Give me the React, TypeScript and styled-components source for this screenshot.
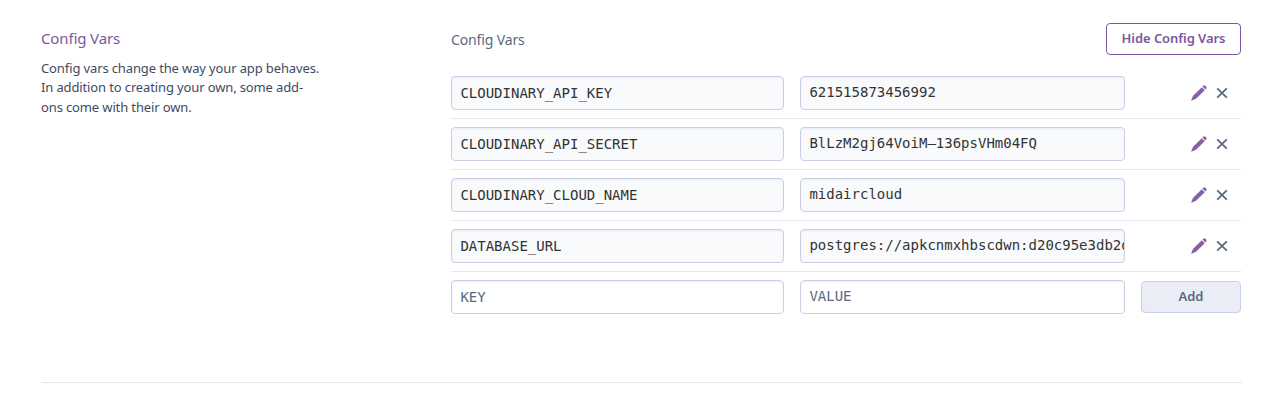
import React from "react";
import styled, { createGlobalStyle } from "styled-components";

const GlobalStyle = createGlobalStyle`
  * { box-sizing: border-box; }
  body {
    margin: 0;
    background: #fff;
    font-family: "Noto Sans", "Open Sans", sans-serif;
    font-feature-settings: "liga" 1;
  }
`;

const Section = styled.section`
  display: flex;
  width: 1200px;
  height: 383px;
  margin-left: 42px;
  border-bottom: 1px solid #e5e6ed;
`;

const Intro = styled.div`
  width: 409px;
  flex: none;
  padding-top: 28px;
  margin-left: -1px;
`;

const Title = styled.h2`
  margin: 0;
  font-size: 15px;
  line-height: 21px;
  letter-spacing: -0.15px;
  font-weight: 400;
  color: #79589f;
`;

const Description = styled.p`
  width: 290px;
  margin: 10px 0 0;
  font-size: 13px;
  line-height: 19.4px;
  letter-spacing: -0.13px;
  color: #3f4a62;
  white-space: nowrap;
`;

const Panel = styled.div`
  width: 790px;
  flex: none;
  margin-left: 1px;
`;

const PanelHeader = styled.header`
  display: flex;
  justify-content: space-between;
  height: 68px;
  padding-top: 23px;
`;

const PanelTitle = styled.h3`
  margin: 7px 0 0;
  font-size: 14px;
  line-height: 20px;
  letter-spacing: -0.15px;
  font-weight: 400;
  color: #596981;
`;

const Button = styled.button<{ $primary?: boolean }>`
  width: ${(p) => (p.$primary ? 135 : 100)}px;
  height: 32px;
  padding: 0 0 2px;
  border: 1px solid ${(p) => (p.$primary ? "#79589f" : "#cbd0e6")};
  border-radius: 4px;
  background: ${(p) => (p.$primary ? "#fff" : "#ebedf6")};
  color: ${(p) => (p.$primary ? "#79589f" : "#596981")};
  font-family: inherit;
  font-size: 13px;
  font-weight: 600;
  letter-spacing: -0.06px;
  line-height: 18px;
  white-space: nowrap;
`;

const Row = styled.div<{ $last?: boolean }>`
  display: grid;
  grid-template-columns: 333px 325px 100px;
  column-gap: 16px;
  align-items: center;
  height: ${(p) => (p.$last ? 50 : 51)}px;
  padding: 8px 0;
  border-bottom: ${(p) => (p.$last ? "none" : "1px solid #e3e5f1")};
`;

const Field = styled.div<{ $empty?: boolean; $value?: boolean }>`
  height: 34px;
  padding-left: 8.4px;
  border: 1px solid #cbd0e6;
  border-radius: 4px;
  background: ${(p) => (p.$empty ? "#fff" : "#f9fafc")};
  box-shadow: inset 0 1px 2px #e8ebf4;
  color: ${(p) => (p.$empty ? "#596981" : "#333")};
  font-family: "DejaVu Sans Mono", monospace;
  font-size: 14px;
  line-height: ${(p) => (p.$value ? 30 : 32)}px;
  white-space: nowrap;
  overflow: hidden;
`;

const Actions = styled.div`
  display: flex;
  justify-content: flex-end;
  align-items: center;
  gap: 9px;
  padding-right: 13px;
`;

const Icon = styled.svg`
  display: block;
  flex: none;
`;

const PencilIcon = () => (
  <Icon width="16" height="16" viewBox="0 0 16 16" fill="#8560a9">
    <path d="M10.8 2.3 13.7 5.2 5 13.7 0.9 15.5Q0 15.7 0.3 14.8L2.1 10.8Z" />
    <path d="M11.5 1.6 12.6 0.6Q13.4 0 14.4 0.8L15.2 1.6Q15.9 2.5 15.3 3.4L14.3 4.4Z" />
  </Icon>
);

const CloseIcon = () => (
  <Icon width="12" height="12" viewBox="0 0 12 12" fill="none" stroke="#596981" strokeWidth="1.8">
    <path d="M1.2 1.4 10.8 10.6M10.8 1.4 1.2 10.6" />
  </Icon>
);

const vars = [
  ["CLOUDINARY_API_KEY", "621515873456992"],
  ["CLOUDINARY_API_SECRET", "BlLzM2gj64VoiM–136psVHm04FQ"],
  ["CLOUDINARY_CLOUD_NAME", "midaircloud"],
  ["DATABASE_URL", "postgres://apkcnmxhbscdwn:d20c95e3db2d"],
];

export default function App() {
  return (
    <>
      <GlobalStyle />
      <Section>
        <Intro>
          <Title>Config Vars</Title>
          <Description>
            Config vars change the way your app behaves.
            <br />
            In addition to creating your own, some add-
            <br />
            ons come with their own.
          </Description>
        </Intro>
        <Panel>
          <PanelHeader>
            <PanelTitle>Config Vars</PanelTitle>
            <Button $primary>Hide Config Vars</Button>
          </PanelHeader>
          {vars.map(([key, value]) => (
            <Row key={key}>
              <Field>{key}</Field>
              <Field $value>{value}</Field>
              <Actions>
                <PencilIcon />
                <CloseIcon />
              </Actions>
            </Row>
          ))}
          <Row $last>
            <Field $empty>KEY</Field>
            <Field $empty $value>VALUE</Field>
            <Button>Add</Button>
          </Row>
        </Panel>
      </Section>
    </>
  );
}
